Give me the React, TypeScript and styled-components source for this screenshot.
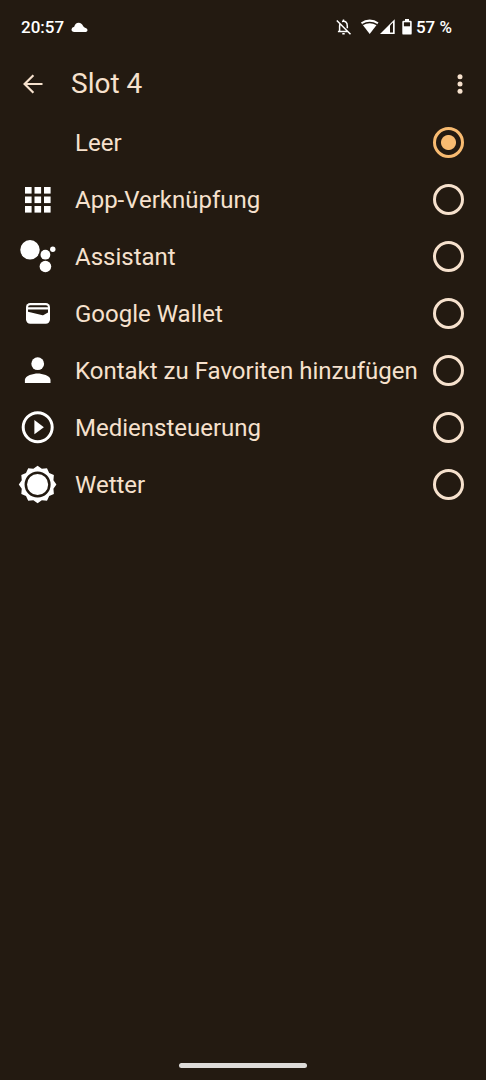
import { useState, type ReactNode } from "react";
import styled, { createGlobalStyle } from "styled-components";

const GlobalStyle = createGlobalStyle`
  *, *::before, *::after { box-sizing: border-box; }
  body {
    margin: 0;
    background: #231a11;
    color: #f6e1cd;
    font-family: Roboto, "Noto Sans", sans-serif;
  }
`;

const Screen = styled.div`
  display: flex;
  flex-direction: column;
  min-height: 100vh;
`;

const StatusBar = styled.div`
  display: flex;
  align-items: center;
  justify-content: space-between;
  height: 54px;
  padding: 0 34px 0 21px;
  color: #fff;
  font-size: 17px;
  line-height: 20px;
  font-weight: 500;
`;

const StatusGroup = styled.div<{ $gap: number }>`
  display: flex;
  align-items: center;
  gap: ${(p) => p.$gap}px;
`;

const Header = styled.header`
  display: flex;
  align-items: center;
  height: 60px;
  padding: 0 12px 0 19px;
`;

const IconButton = styled.button`
  display: grid;
  place-items: center;
  width: 28px;
  height: 44px;
  padding: 0;
  border: 0;
  background: none;
  color: inherit;
  cursor: pointer;
`;

const Title = styled.h1`
  flex: 1;
  margin: 0 0 0 24px;
  font-size: 28px;
  line-height: 36px;
  font-weight: 400;
`;

const OptionList = styled.main`
  display: flex;
  flex-direction: column;
  flex: 1;
`;

const OptionRow = styled.label`
  display: flex;
  align-items: center;
  gap: 16px;
  height: 57px;
  padding: 0 22px 0 18px;
  cursor: pointer;
`;

const OptionIcon = styled.svg`
  flex: none;
  width: 39px;
  height: 39px;
  fill: #fff;
`;

const OptionLabel = styled.span`
  flex: 1;
  min-width: 0;
  padding-left: 2px;
  font-size: 24px;
  line-height: 32px;
  white-space: nowrap;
`;

const Radio = styled.input`
  appearance: none;
  flex: none;
  width: 31px;
  height: 31px;
  margin: 0;
  border: 3px solid #f6e1cd;
  border-radius: 50%;
  cursor: pointer;

  &:checked {
    border-color: #f8bb71;
    background: radial-gradient(circle, #f8bb71 7px, transparent 8px);
  }
`;

const NavArea = styled.footer`
  display: flex;
  justify-content: center;
  padding-bottom: 12px;
`;

const NavHandle = styled.div`
  width: 128px;
  height: 5px;
  border-radius: 3px;
  background: #dddbd9;
`;

const sunPoints = Array.from({ length: 24 }, (_, i) => {
  const r = i % 2 ? 16.4 : 18.8;
  const a = (i * Math.PI) / 12;
  return `${(19.6 + r * Math.sin(a)).toFixed(2)},${(19.5 - r * Math.cos(a)).toFixed(2)}`;
}).join(" ");

const options: { id: string; label: string; icon?: ReactNode }[] = [
  { id: "empty", label: "Leer" },
  {
    id: "app",
    label: "App-Verknüpfung",
    icon: [7, 16.5, 26].map((y) =>
      [7, 16.5, 26].map((x) => <rect key={`${x}-${y}`} x={x} y={y} width="6.6" height="6.6" />),
    ),
  },
  {
    id: "assistant",
    label: "Assistant",
    icon: (
      <>
        <circle cx="12" cy="12.8" r="9.7" />
        <circle cx="27.4" cy="17.7" r="4.9" />
        <circle cx="34.8" cy="12.2" r="2.7" />
        <circle cx="27.4" cy="29.5" r="5.8" />
      </>
    ),
  },
  {
    id: "wallet",
    label: "Google Wallet",
    icon: (
      <>
        <rect x="8" y="9" width="24" height="20.7" rx="4.2" />
        <path
          d="M10 13.200q0-2 2-2h16q2 0 2 2zM10 15.500h20v3l-4.400 2.400q-.9.5-2 .2L10 17.800z"
          fill="#231a11"
        />
      </>
    ),
  },
  {
    id: "contact",
    label: "Kontakt zu Favoriten hinzufügen",
    icon: (
      <>
        <circle cx="19.7" cy="12.7" r="6.4" />
        <path d="M6.900 32v-3.200c0-4.300 8.500-6.400 12.800-6.400s12.800 2.100 12.800 6.400v3.200z" />
      </>
    ),
  },
  {
    id: "media",
    label: "Mediensteuerung",
    icon: (
      <>
        <circle cx="19.7" cy="19.2" r="14.5" fill="none" stroke="#fff" strokeWidth="3" />
        <path d="M16.400 12.100v14.200l9.500-7.100z" />
      </>
    ),
  },
  {
    id: "weather",
    label: "Wetter",
    icon: (
      <>
        <polygon points={sunPoints} />
        <circle cx="19.6" cy="19.5" r="11.8" fill="none" stroke="#231a11" strokeWidth="2.5" />
      </>
    ),
  },
];

export default function App() {
  const [selected, setSelected] = useState("empty");

  return (
    <>
      <GlobalStyle />
      <Screen>
        <StatusBar>
          <StatusGroup $gap={7}>
            <span>20:57</span>
            <svg width="17" height="11" viewBox="0 0 17 11" fill="#fff" aria-hidden="true">
              <path d="M3.200 10q-2.700-.2-2.700-2.500t2.700-2.700Q4.300.7 7.600.7q3.200 0 4.600 3.500 1.200 1.300 3 2 1.300.7 1.300 2T15 10z" />
            </svg>
          </StatusGroup>
          <StatusGroup $gap={7}>
            <svg width="59" height="18" viewBox="0 0 59 18" fill="#fff" aria-hidden="true">
              <g fill="none" stroke="#fff" strokeWidth="1.5">
                <path d="M.8 2.500l13.700 13.700M3.600 13.500V8q0-1.700.8-2.700M6 3.500q5.300-1.100 5.300 4.500v2.300M1.900 13.500h9.300" />
                <path d="M7.500 1.500v2M6.300 15.700h2.400" />
              </g>
              <path d="M33.700 16L24.900 4.600a14.500 14.500 0 0 1 17.600 0z" />
              <path d="M26.400 6.700Q33.700 2.300 41 6.700" fill="none" stroke="#231a11" strokeWidth="1.400" />
              <path d="M44 16L58.700 1.300V16z" />
              <path d="M54 7.500l3-3v10h-3z" fill="#231a11" />
            </svg>
            <StatusGroup $gap={4}>
              <svg width="10" height="16" viewBox="0 0 10 16" fill="#fff" aria-hidden="true">
                <path d="M3 0h4v1.700h1.500q1.200 0 1.200 1.200v11.500q0 1.200-1.200 1.200h-7q-1.200 0-1.200-1.200V2.900q0-1.200 1.200-1.200H3z" />
                <path d="M1.900 3.300h6.200v4H1.900z" fill="#231a11" />
              </svg>
              <span>57 %</span>
            </StatusGroup>
          </StatusGroup>
        </StatusBar>
        <Header>
          <IconButton type="button" aria-label="Zurück">
            <svg width="20" height="20" viewBox="0 0 20 20" fill="none" stroke="currentColor" strokeWidth="2.2">
              <path d="M19.500 10H2M10.400 1.200L1.600 10l8.800 8.800" />
            </svg>
          </IconButton>
          <Title>Slot 4</Title>
          <IconButton type="button" aria-label="Weitere Optionen">
            <svg width="6" height="20" viewBox="0 0 6 20" fill="currentColor">
              <circle cx="3" cy="2.8" r="2.5" />
              <circle cx="3" cy="10" r="2.5" />
              <circle cx="3" cy="17.2" r="2.5" />
            </svg>
          </IconButton>
        </Header>
        <OptionList role="radiogroup" aria-label="Slot 4">
          {options.map((o) => (
            <OptionRow key={o.id} htmlFor={o.id}>
              <OptionIcon viewBox="0 0 39 39" aria-hidden="true">
                {o.icon}
              </OptionIcon>
              <OptionLabel>{o.label}</OptionLabel>
              <Radio
                type="radio"
                id={o.id}
                name="slot"
                checked={selected === o.id}
                onChange={() => setSelected(o.id)}
              />
            </OptionRow>
          ))}
        </OptionList>
        <NavArea>
          <NavHandle />
        </NavArea>
      </Screen>
    </>
  );
}
